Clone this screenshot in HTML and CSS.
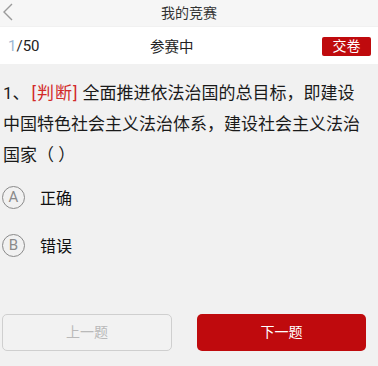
FILE: index.html
```html
<!DOCTYPE html>
<html lang="zh">
<head>
<meta charset="utf-8">
<link rel="stylesheet" href="styles.css">
</head>
<body>
<div class="page">
  <header class="nav">
    <svg class="back" width="12" height="18" viewBox="0 0 12 18"><polyline points="10,1 2,9 10,17" fill="none" stroke="#9a9a9a" stroke-width="1.4"/></svg>
    <span class="nav-title">我的竞赛</span>
  </header>
  <div class="status">
    <span class="count"><span class="cur">1</span>/50</span>
    <span class="state">参赛中</span>
    <span class="submit">交卷</span>
  </div>
  <div class="question"><span class="num">1、</span><span class="tag">[判断]</span><span class="body">全面推进依法治国的总目标，即建设</span><span class="body">中国特色社会主义法治体系，建设社会主义法治国家（ ）</span></div>
  <div class="options">
    <div class="option"><span class="letter">A</span><span class="opt-text">正确</span></div>
    <div class="option"><span class="letter">B</span><span class="opt-text">错误</span></div>
  </div>
  <div class="actions">
    <div class="btn prev">上一题</div>
    <div class="btn next">下一题</div>
  </div>
</div>
</body>
</html>
```

FILE: styles.css
```css
html, body {
  margin: 0;
  padding: 0;
  background: #f1f1f1;
}
.page {
  width: 378px;
  height: 366px;
  overflow: hidden;
  font-family: "Roboto", "Noto Sans CJK SC", sans-serif;
  color: #222;
  background: #f1f1f1;
}
.nav {
  position: relative;
  height: 26px;
  background: #f6f6f6;
  display: flex;
  align-items: center;
  justify-content: center;
}
.back {
  position: absolute;
  left: 2px;
  top: 3px;
}
.nav-title {
  font-size: 14px;
  color: #333;
  line-height: 26px;
}
.status {
  height: 37px;
  margin-top: 1px;
  background: #fff;
  display: flex;
  align-items: center;
  padding: 0 7px 0 8px;
}
.count {
  width: 142px;
  font-size: 15px;
  color: #222;
}
.cur {
  color: #9bb7d4;
}
.state {
  font-size: 14.5px;
  color: #222;
}
.submit {
  margin-left: auto;
  width: 49px;
  height: 19px;
  margin-top: 2px;
  background: #bf0a0d;
  color: #fff;
  font-size: 14px;
  line-height: 19px;
  text-align: center;
  border-radius: 2px;
}
.question {
  margin-top: 14px;
  width: 358px;
  padding-left: 3px;
  font-size: 17px;
  line-height: 31px;
  color: #1a1a1a;
}
.tag {
  color: #d22a2a;
  margin: 0 4px 0 2px;
  letter-spacing: 1px;
}
.options {
  margin-top: 2px;
  display: flex;
  flex-direction: column;
}
.option {
  height: 48px;
  display: flex;
  align-items: center;
  padding-left: 2px;
}
.letter {
  width: 21px;
  height: 21px;
  border: 1px solid #8a8a8a;
  border-radius: 50%;
  color: #8a8a8a;
  font-size: 15px;
  line-height: 21px;
  text-align: center;
}
.opt-text {
  margin-left: 15px;
  font-size: 16px;
  color: #111;
}
.actions {
  margin-top: 45px;
  display: flex;
  gap: 25px;
  padding-left: 2px;
}
.btn {
  height: 37px;
  border-radius: 5px;
  font-size: 14px;
  line-height: 37px;
  text-align: center;
  box-sizing: border-box;
}
.prev {
  width: 170px;
  border: 1px solid #cfcfcf;
  color: #b9b9b9;
  background: #f2f2f2;
  line-height: 35px;
}
.next {
  width: 169px;
  background: #bf0a0d;
  color: #fff;
}
```
